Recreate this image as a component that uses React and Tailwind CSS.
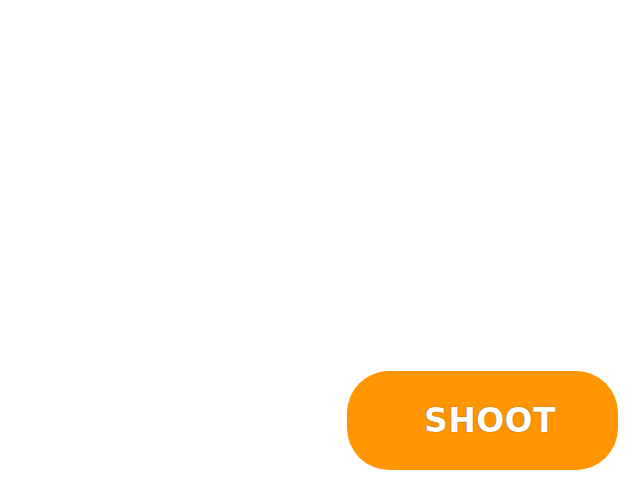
export default function App() {
  return (
    <div className="w-[640px] h-[480px] bg-white flex items-end justify-end pr-[22px] pb-[10px]">
      <button
        className="w-[271px] h-[99px] rounded-[42px] bg-[#ff9500] flex items-center justify-center pl-[15px] text-white text-[33px] tracking-[0.4px] font-bold leading-none"
        style={{ fontFamily: '"DejaVu Sans", sans-serif', textShadow: '0 0 1px rgba(0,0,0,0.7)' }}
      >
        SHOOT
      </button>
    </div>
  );
}
